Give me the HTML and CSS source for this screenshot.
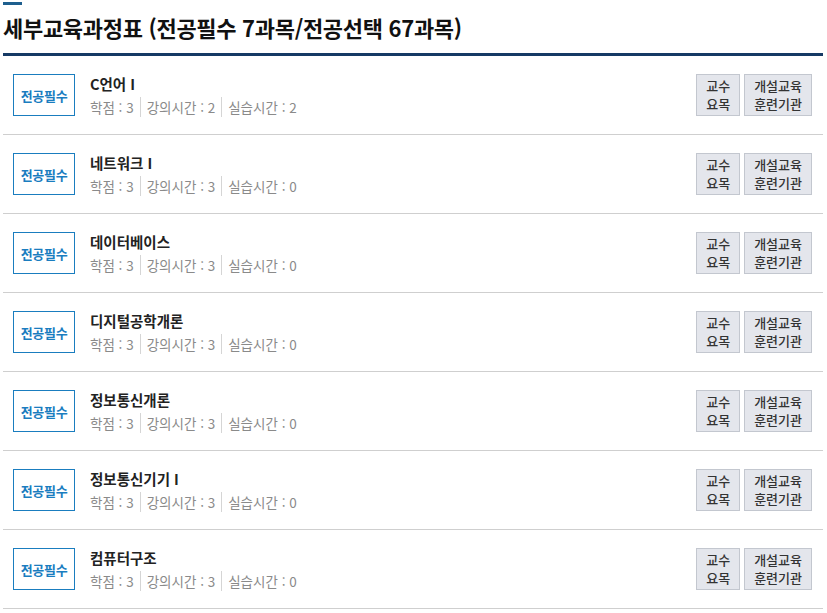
FILE: index.html
```html
<!DOCTYPE html>
<html lang="ko">
<head>
  <meta charset="UTF-8">
  <title>세부교육과정표</title>
  <link rel="stylesheet" href="styles.css">
</head>
<body>
  <div class="wrap">
    <div class="title-box">
      <span class="accent"></span>
      <h2 class="title">세부교육과정표 (전공필수 7과목/전공선택 67과목)</h2>
    </div>

    <ul class="course-list">
      <li class="course">
        <span class="badge">전공필수</span>
        <div class="info">
          <p class="name">C언어 I</p>
          <p class="meta"><span>학점 : 3</span><span>강의시간 : 2</span><span>실습시간 : 2</span></p>
        </div>
        <div class="btns">
          <a href="#" class="btn">교수<br>요목</a>
          <a href="#" class="btn">개설교육<br>훈련기관</a>
        </div>
      </li>
      <li class="course">
        <span class="badge">전공필수</span>
        <div class="info">
          <p class="name">네트워크 I</p>
          <p class="meta"><span>학점 : 3</span><span>강의시간 : 3</span><span>실습시간 : 0</span></p>
        </div>
        <div class="btns">
          <a href="#" class="btn">교수<br>요목</a>
          <a href="#" class="btn">개설교육<br>훈련기관</a>
        </div>
      </li>
      <li class="course">
        <span class="badge">전공필수</span>
        <div class="info">
          <p class="name">데이터베이스</p>
          <p class="meta"><span>학점 : 3</span><span>강의시간 : 3</span><span>실습시간 : 0</span></p>
        </div>
        <div class="btns">
          <a href="#" class="btn">교수<br>요목</a>
          <a href="#" class="btn">개설교육<br>훈련기관</a>
        </div>
      </li>
      <li class="course">
        <span class="badge">전공필수</span>
        <div class="info">
          <p class="name">디지털공학개론</p>
          <p class="meta"><span>학점 : 3</span><span>강의시간 : 3</span><span>실습시간 : 0</span></p>
        </div>
        <div class="btns">
          <a href="#" class="btn">교수<br>요목</a>
          <a href="#" class="btn">개설교육<br>훈련기관</a>
        </div>
      </li>
      <li class="course">
        <span class="badge">전공필수</span>
        <div class="info">
          <p class="name">정보통신개론</p>
          <p class="meta"><span>학점 : 3</span><span>강의시간 : 3</span><span>실습시간 : 0</span></p>
        </div>
        <div class="btns">
          <a href="#" class="btn">교수<br>요목</a>
          <a href="#" class="btn">개설교육<br>훈련기관</a>
        </div>
      </li>
      <li class="course">
        <span class="badge">전공필수</span>
        <div class="info">
          <p class="name">정보통신기기 I</p>
          <p class="meta"><span>학점 : 3</span><span>강의시간 : 3</span><span>실습시간 : 0</span></p>
        </div>
        <div class="btns">
          <a href="#" class="btn">교수<br>요목</a>
          <a href="#" class="btn">개설교육<br>훈련기관</a>
        </div>
      </li>
      <li class="course">
        <span class="badge">전공필수</span>
        <div class="info">
          <p class="name">컴퓨터구조</p>
          <p class="meta"><span>학점 : 3</span><span>강의시간 : 3</span><span>실습시간 : 0</span></p>
        </div>
        <div class="btns">
          <a href="#" class="btn">교수<br>요목</a>
          <a href="#" class="btn">개설교육<br>훈련기관</a>
        </div>
      </li>
    </ul>
  </div>
</body>
</html>
```

FILE: styles.css
```css
body {
  margin: 0;
  padding: 0;
  background-color: #fff;
  font-family: "Noto Sans CJK KR", "Noto Sans", sans-serif;
  color: #222;
}

.wrap {
  width: 820px;
  margin-left: 3px;
}

/* Title */
.title-box {
  padding-top: 2px;
  border-bottom: 3px solid #163a65;
}

.accent {
  display: block;
  width: 19px;
  height: 3px;
  background-color: #1e5f8e;
}

.title {
  margin: 0;
  padding: 7px 0 11px;
  font-size: 22px;
  font-weight: 700;
  line-height: 30px;
  color: #111;
  letter-spacing: -0.3px;
}

/* Course rows */
.course-list {
  list-style: none;
  margin: 0;
  padding: 0;
}

.course {
  display: flex;
  align-items: center;
  height: 78px;
  padding: 0 11px 0 10px;
  border-bottom: 1px solid #cfcfcf;
}

.badge {
  display: flex;
  align-items: center;
  justify-content: center;
  box-sizing: border-box;
  width: 62px;
  height: 42px;
  border: 1px solid #1a7dbf;
  color: #1a7dbf;
  font-size: 13px;
  font-weight: 700;
  letter-spacing: -0.3px;
}

.info {
  flex: 1;
  margin-left: 15px;
}

.name {
  margin: 0 0 4px;
  font-size: 14.5px;
  font-weight: 700;
  line-height: 20px;
  color: #222;
}

.meta {
  margin: 0;
  font-size: 13.5px;
  line-height: 18px;
  color: #8a8a8a;
}

.meta span + span {
  margin-left: 6px;
  padding-left: 6px;
  border-left: 1px solid #d5d5d5;
}

.btns {
  display: flex;
  gap: 4px;
}

.btn {
  display: flex;
  align-items: center;
  justify-content: center;
  box-sizing: border-box;
  height: 42px;
  padding: 0 9px;
  background-color: #e4e6ec;
  border: 1px solid #c3c7cf;
  color: #333;
  font-size: 13px;
  font-weight: 500;
  line-height: 18px;
  text-align: center;
  text-decoration: none;
}
```
